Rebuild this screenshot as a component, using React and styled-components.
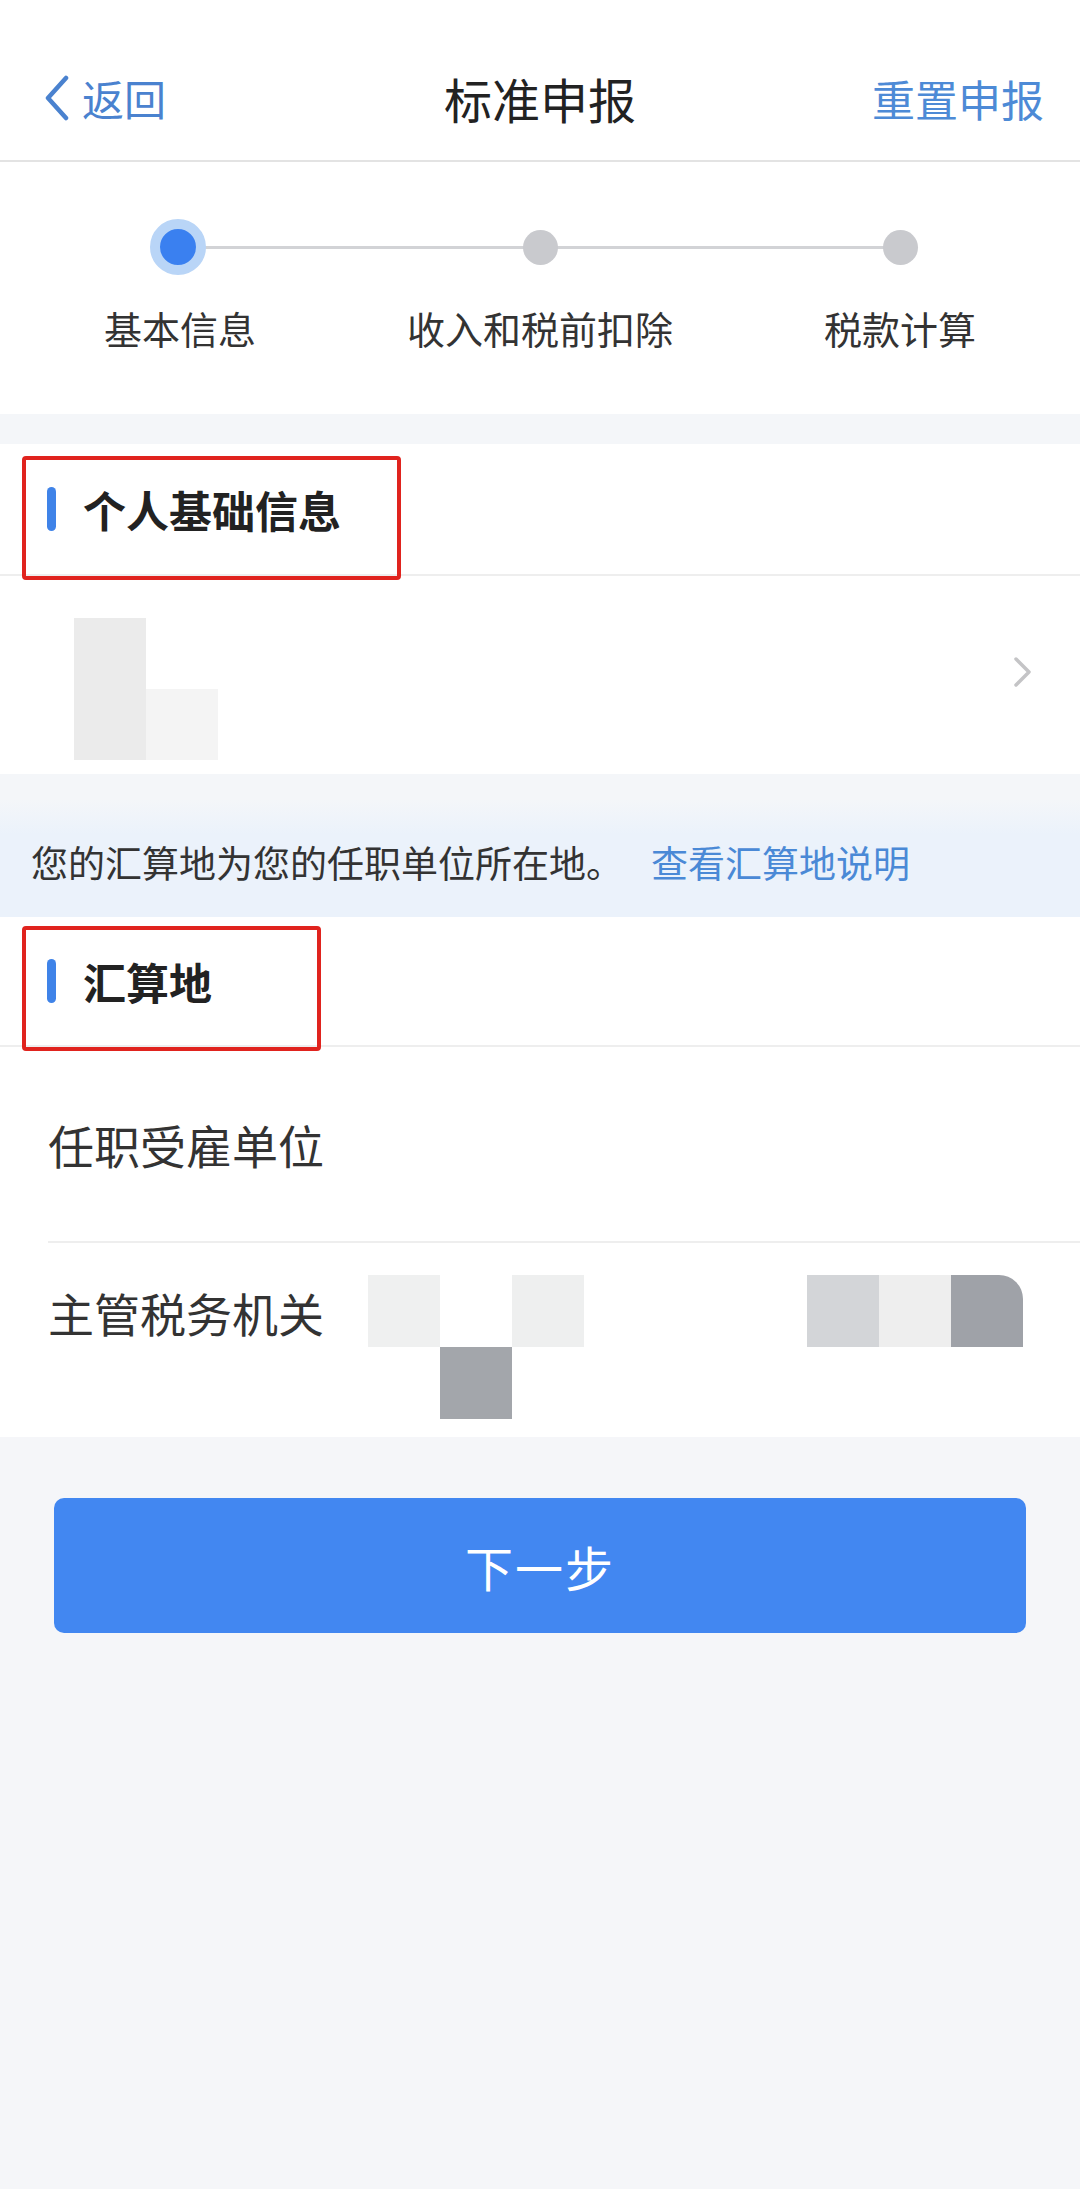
import React from "react";
import styled, { createGlobalStyle } from "styled-components";

const GlobalStyle = createGlobalStyle`
  html, body {
    margin: 0;
    padding: 0;
    background: #f5f6f9;
  }
  body {
    font-family: "Noto Sans CJK SC", "Noto Sans", sans-serif;
    -webkit-font-smoothing: antialiased;
  }
  * { box-sizing: border-box; }
`;

const Page = styled.div`
  min-height: 2189px;
  background: #f5f6f9;
  display: flex;
  flex-direction: column;
`;

const NavBar = styled.header`
  height: 162px;
  padding-top: 36px;
  background: #fff;
  border-bottom: 2px solid #e3e3e3;
  display: grid;
  grid-template-columns: 1fr auto 1fr;
  align-items: center;
`;

const BackButton = styled.div`
  display: flex;
  align-items: center;
  gap: 12px;
  padding-left: 44px;
  color: #4a82cf;
  font-size: 42px;
  line-height: 1;
`;

const NavTitle = styled.div`
  font-size: 48px;
  color: #222;
  line-height: 1;
`;

const NavAction = styled.div`
  justify-self: end;
  padding-right: 36px;
  font-size: 43px;
  color: #4d8ad6;
  line-height: 1;
`;

const Stepper = styled.section`
  background: #fff;
  height: 252px;
  padding-top: 57px;
  display: grid;
  grid-template-columns: repeat(3, 1fr);
`;

const StepItem = styled.div`
  position: relative;
  display: flex;
  flex-direction: column;
  align-items: center;

  &::before,
  &::after {
    content: "";
    position: absolute;
    top: 27px;
    height: 3px;
    background: #d2d3d6;
  }
  &::before {
    left: 0;
    right: 50%;
    display: ${(p) => (p.$first ? "none" : "block")};
  }
  &::after {
    left: 50%;
    right: 0;
    display: ${(p) => (p.$last ? "none" : "block")};
  }
`;

const DotWrap = styled.div`
  position: relative;
  z-index: 1;
  width: 56px;
  height: 56px;
  display: flex;
  align-items: center;
  justify-content: center;
  margin-left: ${(p) => (p.$active ? "-4px" : "0")};
`;

const Dot = styled.div`
  width: ${(p) => (p.$active ? "56px" : "35px")};
  height: ${(p) => (p.$active ? "56px" : "35px")};
  border-radius: 50%;
  background: ${(p) => (p.$active ? "#3a80f0" : "#c9cace")};
  border: ${(p) => (p.$active ? "10px solid #b9d5f7" : "none")};
`;

const StepLabel = styled.div`
  margin-top: 30px;
  font-size: 38px;
  line-height: 46px;
  color: #333;
  white-space: nowrap;
`;

const Gap = styled.div`
  height: 30px;
  background: #f4f6f9;
`;

const Card = styled.section`
  background: #fff;
`;

const SectionHeader = styled.div`
  position: relative;
  height: ${(p) => p.$h}px;
  border-bottom: 2px solid #eeeeee;
  display: flex;
  align-items: center;
  padding-left: 47px;
  gap: 27px;
`;

const AccentBar = styled.span`
  width: 9px;
  height: 44px;
  border-radius: 5px;
  background: #3f83e8;
`;

const SectionTitle = styled.h2`
  margin: 0;
  font-size: 43px;
  font-weight: 700;
  color: #222;
  line-height: 1;
`;

const Highlight = styled.div`
  position: absolute;
  left: 22px;
  top: ${(p) => p.$top}px;
  width: ${(p) => p.$w}px;
  height: ${(p) => p.$h}px;
  border: 4px solid #e0231e;
  border-radius: 4px;
  pointer-events: none;
`;

const ProfileRow = styled.div`
  height: 198px;
  padding: 42px 46px 0 74px;
  display: flex;
  align-items: flex-start;
  justify-content: space-between;
`;

const Mosaic = styled.div`
  display: grid;
  grid-template-columns: repeat(${(p) => p.$cols}, ${(p) => p.$cw}px);
  grid-auto-rows: ${(p) => p.$ch}px;
  margin-left: ${(p) => p.$ml || "0"};
`;

const Cell = styled.div`
  background: ${(p) => p.$c || "transparent"};
  border-top-right-radius: ${(p) => p.$r || "0"};
`;

const ChevronWrap = styled.div`
  margin-top: 38px;
  display: flex;
`;

const Notice = styled.div`
  height: 143px;
  padding-left: 31px;
  display: flex;
  align-items: center;
  padding-top: 32px;
  font-size: 37px;
  color: #333;
  background: linear-gradient(#f4f6f9 0%, #f4f6f9 18%, #ebf2fb 42%, #ebf2fb 100%);
  white-space: nowrap;
`;

const NoticeLink = styled.span`
  color: #4a89d6;
  margin-left: 28px;
`;

const FieldRow = styled.div`
  margin-left: 48px;
  height: ${(p) => p.$h}px;
  border-bottom: ${(p) => (p.$divider ? "2px solid #eeeeee" : "none")};
  display: flex;
  align-items: ${(p) => (p.$top ? "flex-start" : "center")};
  padding-top: ${(p) => (p.$top ? "32px" : "0")};
  padding-right: 57px;
`;

const FieldLabel = styled.div`
  font-size: 46px;
  line-height: ${(p) => (p.$top ? "74px" : "1")};
  color: #333;
  white-space: nowrap;
  width: 320px;
  flex-shrink: 0;
`;

const Footer = styled.div`
  padding: 61px 54px 0;
`;

const PrimaryButton = styled.button`
  width: 100%;
  height: 135px;
  border: none;
  border-radius: 10px;
  background: #4287f1;
  color: #fff;
  font-family: "Noto Sans CJK SC", "Noto Sans", sans-serif;
  font-size: 48px;
  letter-spacing: 2px;
`;

const BackChevron = () => (
  <svg width="26" height="46" viewBox="0 0 26 46" fill="none">
    <path d="M22 3 L4 23 L22 43" stroke="#4a82cf" strokeWidth="4.5" strokeLinecap="round" strokeLinejoin="round" />
  </svg>
);

const RightChevron = () => (
  <svg width="22" height="32" viewBox="0 0 22 32" fill="none">
    <path d="M4 3 L17 16 L4 29" stroke="#c4c4c6" strokeWidth="3.5" strokeLinecap="round" strokeLinejoin="round" />
  </svg>
);

const steps = ["基本信息", "收入和税前扣除", "税款计算"];

export default function App() {
  return (
    <>
      <GlobalStyle />
      <Page>
        <NavBar>
          <BackButton>
            <BackChevron />
            <span>返回</span>
          </BackButton>
          <NavTitle>标准申报</NavTitle>
          <NavAction>重置申报</NavAction>
        </NavBar>

        <Stepper>
          {steps.map((s, i) => (
            <StepItem key={s} $first={i === 0} $last={i === steps.length - 1}>
              <DotWrap $active={i === 0}>
                <Dot $active={i === 0} />
              </DotWrap>
              <StepLabel>{s}</StepLabel>
            </StepItem>
          ))}
        </Stepper>

        <Gap />

        <Card>
          <SectionHeader $h={132}>
            <AccentBar />
            <SectionTitle>个人基础信息</SectionTitle>
            <Highlight $top={12} $w={379} $h={124} />
          </SectionHeader>
          <ProfileRow>
            <Mosaic $cols={2} $cw={72} $ch={71}>
              <Cell $c="#ebebeb" />
              <Cell />
              <Cell $c="#ebebeb" />
              <Cell $c="#f4f4f4" />
            </Mosaic>
            <ChevronWrap>
              <RightChevron />
            </ChevronWrap>
          </ProfileRow>
        </Card>

        <Notice>
          您的汇算地为您的任职单位所在地。
          <NoticeLink>查看汇算地说明</NoticeLink>
        </Notice>

        <Card>
          <SectionHeader $h={130}>
            <AccentBar />
            <SectionTitle>汇算地</SectionTitle>
            <Highlight $top={9} $w={299} $h={125} />
          </SectionHeader>
          <FieldRow $h={196} $divider>
            <FieldLabel>任职受雇单位</FieldLabel>
          </FieldRow>
          <FieldRow $h={194} $top>
            <FieldLabel $top>主管税务机关</FieldLabel>
            <Mosaic $cols={3} $cw={72} $ch={72}>
              <Cell $c="#eff0f0" />
              <Cell />
              <Cell $c="#eeefef" />
              <Cell />
              <Cell $c="#a3a6ab" />
              <Cell />
            </Mosaic>
            <Mosaic $cols={3} $cw={72} $ch={72} $ml="auto">
              <Cell $c="#d3d5d8" />
              <Cell $c="#eeeeee" />
              <Cell $c="#9fa2a8" $r="24px" />
            </Mosaic>
          </FieldRow>
        </Card>

        <Footer>
          <PrimaryButton>下一步</PrimaryButton>
        </Footer>
      </Page>
    </>
  );
}
